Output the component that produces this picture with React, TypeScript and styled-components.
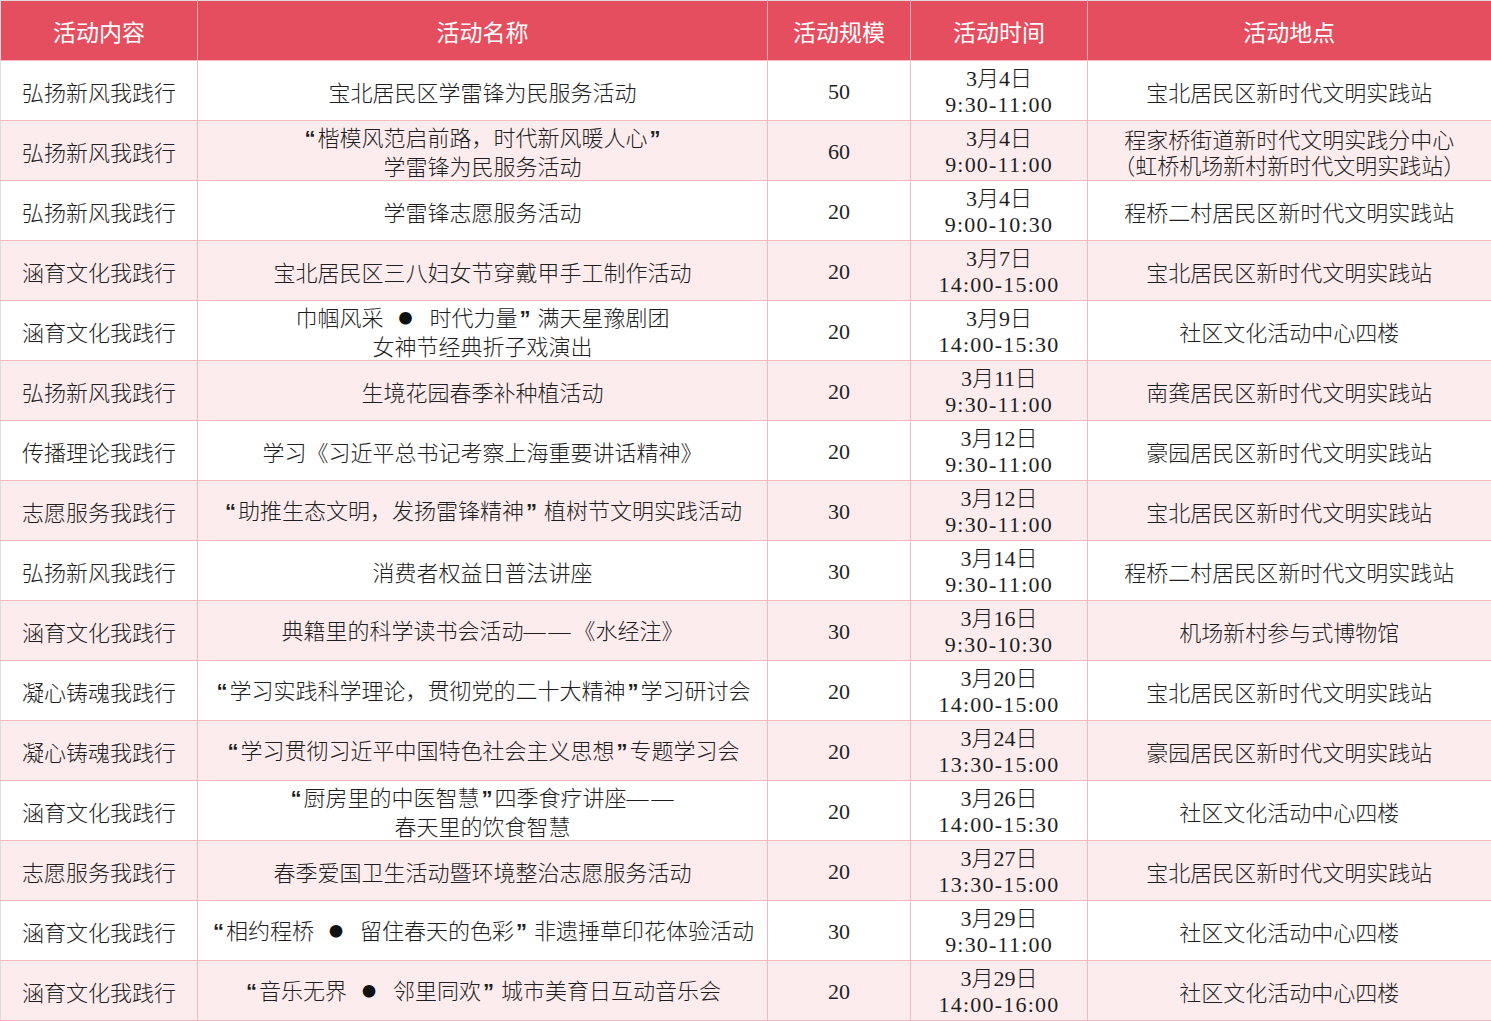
import styled, { createGlobalStyle } from 'styled-components'

// Global reset so the table sits flush with the window edges
const GlobalStyle = createGlobalStyle`
  html, body {
    margin: 0;
    padding: 0;
    background: #ffffff;
  }
`;

interface Activity {
  category: string;
  name: string[];
  size: number;
  date: string;
  time: string;
  place: string[];
}

const activities: Activity[] = [
  { category: '弘扬新风我践行', name: ['宝北居民区学雷锋为民服务活动'], size: 50, date: '3月4日', time: '9:30-11:00', place: ['宝北居民区新时代文明实践站'] },
  { category: '弘扬新风我践行', name: ['“楷模风范启前路，时代新风暖人心”', '学雷锋为民服务活动'], size: 60, date: '3月4日', time: '9:00-11:00', place: ['程家桥街道新时代文明实践分中心', '（虹桥机场新村新时代文明实践站）'] },
  { category: '弘扬新风我践行', name: ['学雷锋志愿服务活动'], size: 20, date: '3月4日', time: '9:00-10:30', place: ['程桥二村居民区新时代文明实践站'] },
  { category: '涵育文化我践行', name: ['宝北居民区三八妇女节穿戴甲手工制作活动'], size: 20, date: '3月7日', time: '14:00-15:00', place: ['宝北居民区新时代文明实践站'] },
  { category: '涵育文化我践行', name: ['巾帼风采 ● 时代力量” 满天星豫剧团', '女神节经典折子戏演出'], size: 20, date: '3月9日', time: '14:00-15:30', place: ['社区文化活动中心四楼'] },
  { category: '弘扬新风我践行', name: ['生境花园春季补种植活动'], size: 20, date: '3月11日', time: '9:30-11:00', place: ['南龚居民区新时代文明实践站'] },
  { category: '传播理论我践行', name: ['学习《习近平总书记考察上海重要讲话精神》'], size: 20, date: '3月12日', time: '9:30-11:00', place: ['豪园居民区新时代文明实践站'] },
  { category: '志愿服务我践行', name: ['“助推生态文明，发扬雷锋精神” 植树节文明实践活动'], size: 30, date: '3月12日', time: '9:30-11:00', place: ['宝北居民区新时代文明实践站'] },
  { category: '弘扬新风我践行', name: ['消费者权益日普法讲座'], size: 30, date: '3月14日', time: '9:30-11:00', place: ['程桥二村居民区新时代文明实践站'] },
  { category: '涵育文化我践行', name: ['典籍里的科学读书会活动——《水经注》'], size: 30, date: '3月16日', time: '9:30-10:30', place: ['机场新村参与式博物馆'] },
  { category: '凝心铸魂我践行', name: ['“学习实践科学理论，贯彻党的二十大精神”学习研讨会'], size: 20, date: '3月20日', time: '14:00-15:00', place: ['宝北居民区新时代文明实践站'] },
  { category: '凝心铸魂我践行', name: ['“学习贯彻习近平中国特色社会主义思想”专题学习会'], size: 20, date: '3月24日', time: '13:30-15:00', place: ['豪园居民区新时代文明实践站'] },
  { category: '涵育文化我践行', name: ['“厨房里的中医智慧”四季食疗讲座——', '春天里的饮食智慧'], size: 20, date: '3月26日', time: '14:00-15:30', place: ['社区文化活动中心四楼'] },
  { category: '志愿服务我践行', name: ['春季爱国卫生活动暨环境整治志愿服务活动'], size: 20, date: '3月27日', time: '13:30-15:00', place: ['宝北居民区新时代文明实践站'] },
  { category: '涵育文化我践行', name: ['“相约程桥 ● 留住春天的色彩” 非遗捶草印花体验活动'], size: 30, date: '3月29日', time: '9:30-11:00', place: ['社区文化活动中心四楼'] },
  { category: '涵育文化我践行', name: ['“音乐无界 ● 邻里同欢” 城市美育日互动音乐会'], size: 20, date: '3月29日', time: '14:00-16:00', place: ['社区文化活动中心四楼'] },
];

const columns = [
  { title: '活动内容', width: 197 },
  { title: '活动名称', width: 570 },
  { title: '活动规模', width: 143 },
  { title: '活动时间', width: 177 },
  { title: '活动地点', width: 404 },
];

// Table frame: grey hairline on top/left, red edge on the right
const Table = styled.table`
  width: 1491px;
  table-layout: fixed;
  border-collapse: collapse;
  border-top: 1px solid #dcdcdc;
  border-left: 1px solid #dcdcdc;
  border-right: 2px solid #e54e5f;
`;

const HeadCell = styled.th`
  height: 59px;
  padding: 0;
  background: #e54e5f;
  color: #ffffff;
  font-family: 'Noto Sans CJK SC', sans-serif;
  font-weight: 400;
  font-size: 23px;
  text-align: center;
  vertical-align: middle;
  border-left: 1px solid #f4a9b1;
  border-bottom: 1px solid #f5b8bf;

  &:first-child {
    border-left: none;
  }
`;

const Row = styled.tr<{ $striped: boolean }>`
  background: ${(p) => (p.$striped ? '#fdecee' : '#ffffff')};
`;

const Cell = styled.td<{ $serif?: boolean }>`
  height: 59px;
  padding: 0;
  text-align: center;
  vertical-align: middle;
  color: #1e1e1e;
  font-family: ${(p) =>
    p.$serif
      ? "'Liberation Serif', 'Noto Sans CJK SC', serif"
      : "'Noto Sans CJK SC', sans-serif"};
  font-weight: 300;
  font-size: 22px;
  line-height: 26px;
  border: 1px solid #f5b8bf;
  border-top: none;
  white-space: nowrap;

  &:first-child {
    border-left: none;
  }
`;

// Serif figures sit a little low against the CJK baseline
const SerifBox = styled.div`
  padding-top: 3px;
`;

const Line = styled.div`
  display: block;
`;

const TimeLine = styled.div`
  letter-spacing: 1.2px;
`;

// Heavy latin curly quotes, as the source font draws them
const Quote = styled.span`
  font-family: 'Liberation Sans', sans-serif;
  font-weight: 700;
  padding: 0 2px;
`;

// Round bullet with wide gaps on either side
const Dot = styled.span`
  display: inline-block;
  font-family: 'Noto Sans CJK SC', sans-serif;
  font-size: 14px;
  line-height: 14px;
  color: #111111;
  vertical-align: 3px;
  margin: 0 17px 0 15px;
`;

// Em dashes drawn apart from each other
const Dash = styled.span`
  font-family: 'Liberation Serif', serif;
  letter-spacing: 3px;
`;

const renderText = (text: string) =>
  text.split(/([“”]|——| ● )/).map((part, i) => {
    if (part === '“' || part === '”') return <Quote key={i}>{part}</Quote>;
    if (part === '——') return <Dash key={i}>{part}</Dash>;
    if (part === ' ● ') return <Dot key={i}>●</Dot>;
    return part;
  });

const App = () => {
  return (
    <>
      <GlobalStyle />
      <Table>
        <colgroup>
          {columns.map((c) => (
            <col key={c.title} style={{ width: c.width }} />
          ))}
        </colgroup>
        <thead>
          <tr>
            {columns.map((c) => (
              <HeadCell key={c.title}>{c.title}</HeadCell>
            ))}
          </tr>
        </thead>
        <tbody>
          {activities.map((a, i) => (
            <Row key={i} $striped={i % 2 === 1}>
              <Cell>{a.category}</Cell>
              <Cell>
                {a.name.map((n) => (
                  <Line key={n}>{renderText(n)}</Line>
                ))}
              </Cell>
              <Cell $serif>
                <SerifBox>{a.size}</SerifBox>
              </Cell>
              <Cell $serif>
                <SerifBox>
                  <Line>{a.date}</Line>
                  <TimeLine>{a.time}</TimeLine>
                </SerifBox>
              </Cell>
              <Cell>
                {a.place.map((p) => (
                  <Line key={p}>{p}</Line>
                ))}
              </Cell>
            </Row>
          ))}
        </tbody>
      </Table>
    </>
  );
};

export default App
